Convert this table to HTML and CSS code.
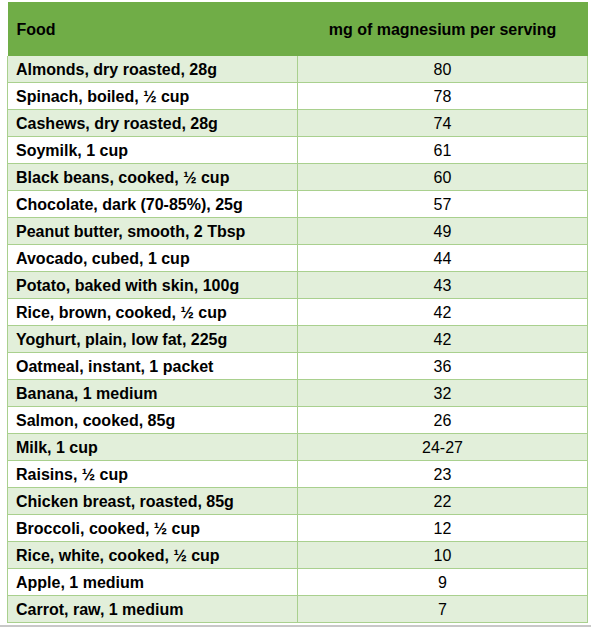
FILE: index.html
```html
<!DOCTYPE html>
<html>
<head>
<meta charset="utf-8">
<link rel="stylesheet" href="styles.css">
</head>
<body>
<div class="wrap">
<table class="mg">
<thead>
<tr><th class="c1">Food</th><th class="c2">mg of magnesium per serving</th></tr>
</thead>
<tbody>
<tr class="alt"><td class="c1">Almonds, dry roasted, 28g</td><td class="c2">80</td></tr>
<tr><td class="c1">Spinach, boiled, ½ cup</td><td class="c2">78</td></tr>
<tr class="alt"><td class="c1">Cashews, dry roasted, 28g</td><td class="c2">74</td></tr>
<tr><td class="c1">Soymilk, 1 cup</td><td class="c2">61</td></tr>
<tr class="alt"><td class="c1">Black beans, cooked, ½ cup</td><td class="c2">60</td></tr>
<tr><td class="c1">Chocolate, dark (70-85%), 25g</td><td class="c2">57</td></tr>
<tr class="alt"><td class="c1">Peanut butter, smooth, 2 Tbsp</td><td class="c2">49</td></tr>
<tr><td class="c1">Avocado, cubed, 1 cup</td><td class="c2">44</td></tr>
<tr class="alt"><td class="c1">Potato, baked with skin, 100g</td><td class="c2">43</td></tr>
<tr><td class="c1">Rice, brown, cooked, ½ cup</td><td class="c2">42</td></tr>
<tr class="alt"><td class="c1">Yoghurt, plain, low fat, 225g</td><td class="c2">42</td></tr>
<tr><td class="c1">Oatmeal, instant, 1 packet</td><td class="c2">36</td></tr>
<tr class="alt"><td class="c1">Banana, 1 medium</td><td class="c2">32</td></tr>
<tr><td class="c1">Salmon, cooked, 85g</td><td class="c2">26</td></tr>
<tr class="alt"><td class="c1">Milk, 1 cup</td><td class="c2">24-27</td></tr>
<tr><td class="c1">Raisins, ½ cup</td><td class="c2">23</td></tr>
<tr class="alt"><td class="c1">Chicken breast, roasted, 85g</td><td class="c2">22</td></tr>
<tr><td class="c1">Broccoli, cooked, ½ cup</td><td class="c2">12</td></tr>
<tr class="alt"><td class="c1">Rice, white, cooked, ½ cup</td><td class="c2">10</td></tr>
<tr><td class="c1">Apple, 1 medium</td><td class="c2">9</td></tr>
<tr class="alt"><td class="c1">Carrot, raw, 1 medium</td><td class="c2">7</td></tr>
</tbody>
</table>
</div>
<div class="rule"></div>
</body>
</html>
```
FILE: styles.css
```css
html, body {
  margin: 0;
  padding: 0;
  background: #ffffff;
}
body {
  font-family: "Liberation Sans", Arial, sans-serif;
  color: #000000;
}
.wrap {
  padding: 2px 0 0 7px;
  height: 624px;
  box-sizing: border-box;
}
.mg {
  border-collapse: collapse;
  table-layout: fixed;
  width: 581px;
}
.mg th {
  background: #70ad47;
  height: 52px;
  padding: 2px 0 0 0;
  font-size: 16px;
  font-weight: bold;
  vertical-align: middle;
  border: none;
}
.mg th.c1 {
  text-align: left;
  padding-left: 9px;
  width: 281px;
}
.mg th.c2 {
  text-align: center;
}
.mg td {
  height: 25px;
  padding: 1px 0 0 0;
  font-size: 16px;
  line-height: 18px;
  border: 1px solid #a9d08e;
  border-top: none;
  vertical-align: middle;
}
.mg td.c1 {
  font-weight: bold;
  padding-left: 8px;
}
.mg td.c2 {
  text-align: center;
}
.mg tr.alt td {
  background: #e2efda;
}
.rule {
  height: 2px;
  background: #c8c8c8;
  margin-top: 1px;
}
```
